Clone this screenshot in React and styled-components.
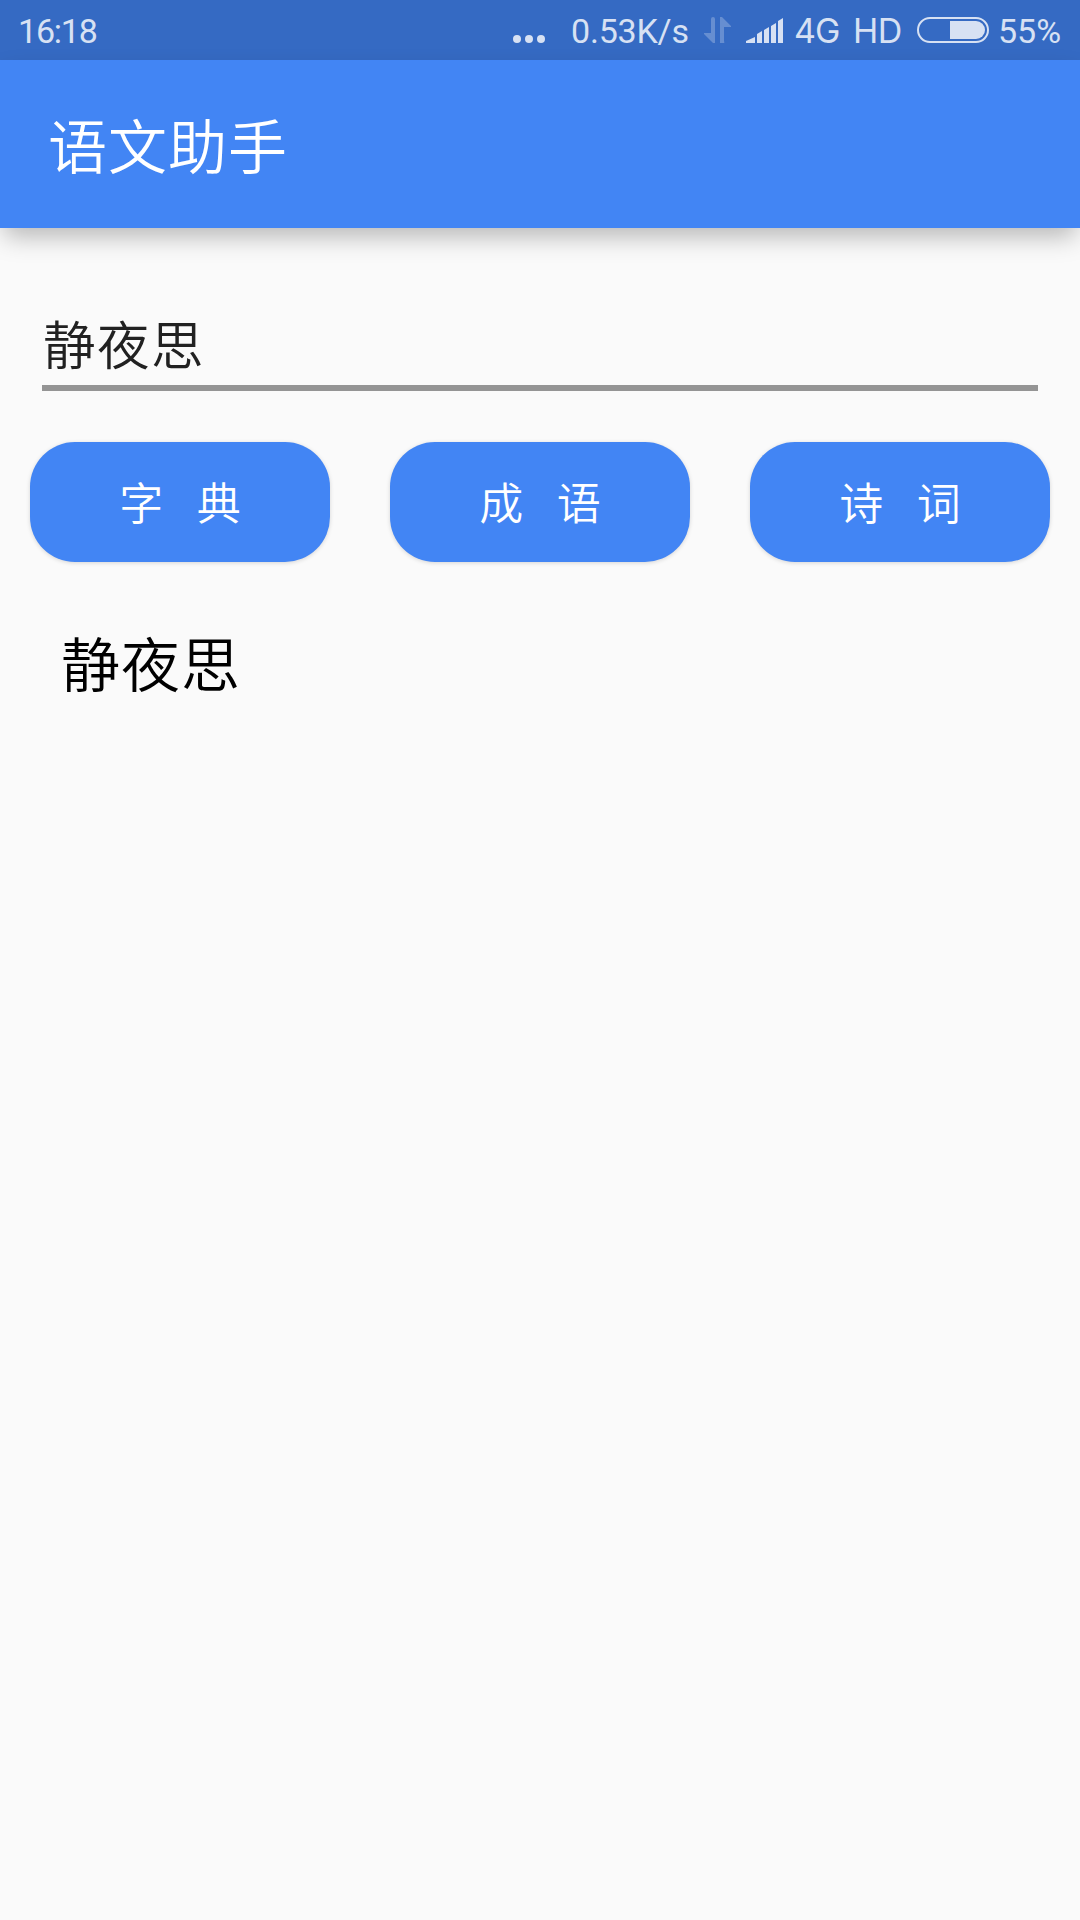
import React, { useState } from 'react'
import styled, { createGlobalStyle } from 'styled-components'

const categories = ['字 典', '成 语', '诗 词']

const App = () => {
    const [keyword, setKeyword] = useState('静夜思')

    return (
        <Screen>
            <GlobalStyle />
            <StatusBar>
                <StatusText $width={495} $spacing={-1.2}>16:18</StatusText>
                <Dots viewBox="0 0 32 8">
                    <circle cx="4" cy="4" r="4" />
                    <circle cx="16" cy="4" r="4" />
                    <circle cx="28" cy="4" r="4" />
                </Dots>
                <StatusText $width={133} $spacing={-0.2}>0.53K/s</StatusText>
                <Transfer viewBox="0 0 27 26">
                    <path d="M7 2a2 2 0 0 1 4 0v24h-2L0 17v-1h7zM16 26V0h2l9 9v1h-7v14a2 2 0 0 1-4 2z" />
                </Transfer>
                <Signal viewBox="0 0 37 25">
                    <path d="M0 25v-2l9-4v6zM11 25v-9l5-3v12zM18 25V12l5-3v16zM25 25V8l5-3v20zM32 25V3l5-3v25z" />
                </Signal>
                <NetworkText $width={59} $spacing={-1}>4G</NetworkText>
                <NetworkText $width={64} $spacing={-0.6}>HD</NetworkText>
                <Battery viewBox="0 0 72 26">
                    <rect x="1" y="1" width="70" height="24" rx="12" />
                    <path d="M33 4h26a9 9 0 0 1 0 18H33z" />
                </Battery>
                <StatusText $width={82} $spacing={0}>55%</StatusText>
            </StatusBar>
            <AppBar>
                <h1>语文助手</h1>
            </AppBar>
            <Content>
                <SearchInput value={keyword} onChange={(e) => setKeyword(e.target.value)} />
                <ButtonRow>
                    {categories.map((name) => (
                        <CategoryButton key={name}>{name}</CategoryButton>
                    ))}
                </ButtonRow>
                <Result>{keyword}</Result>
            </Content>
        </Screen>
    )
}

const GlobalStyle = createGlobalStyle`
    body{
        margin: 0;
        background: #fafafa;
    }
    *{
        box-sizing: border-box;
    }
`

const Screen = styled.div`
    height: 1920px;
    overflow: hidden;
    background: #fafafa;
    font-family: Roboto, 'Noto Sans CJK SC', sans-serif;
`

const StatusBar = styled.div`
    display: flex;
    align-items: center;
    height: 60px;
    padding-left: 18px;
    background: #356ac3;
    color: #d7e1f3;
    svg{
        flex: none;
        fill: #d7e1f3;
    }
`

const StatusText = styled.span`
    flex: none;
    width: ${(props) => props.$width}px;
    font-size: 34px;
    line-height: 60px;
    padding-top: 2px;
    letter-spacing: ${(props) => props.$spacing}px;
    white-space: nowrap;
`

const NetworkText = styled(StatusText)`
    font-family: Inter, sans-serif;
`

const Dots = styled.svg`
    width: 32px;
    height: 8px;
    margin: 18px 26px 0 0;
`

const Transfer = styled.svg`
    width: 27px;
    height: 26px;
    margin-right: 15px;
    opacity: 0.3;
`

const Signal = styled.svg`
    width: 37px;
    height: 25px;
    margin: 1px 11px 0 0;
`

const Battery = styled.svg`
    width: 72px;
    height: 26px;
    margin-right: 9px;
    rect{
        fill: none;
        stroke: #d7e1f3;
        stroke-width: 2;
    }
`

const AppBar = styled.header`
    position: relative;
    display: flex;
    align-items: center;
    height: 168px;
    padding: 9px 0 0 48px;
    background: #4285f4;
    box-shadow: 0 12px 24px -4px rgba(0,0,0,0.28);
    h1{
        margin: 0;
        color: #fff;
        font-size: 59px;
        font-weight: 350;
        line-height: 84px;
        letter-spacing: 1px;
    }
`

const Content = styled.main`
    padding: 72px 30px 0;
`

const SearchInput = styled.input`
    display: block;
    width: 996px;
    height: 91px;
    margin: 0 12px;
    padding: 0 0 2px 1px;
    border: none;
    border-bottom: 6px solid #949494;
    outline: none;
    background: none;
    color: #212121;
    font-family: inherit;
    font-size: 52.5px;
    font-weight: 350;
    letter-spacing: 1.5px;
`

const ButtonRow = styled.div`
    display: flex;
    gap: 60px;
    margin-top: 51px;
`

const CategoryButton = styled.button`
    width: 300px;
    height: 120px;
    padding: 0 0 2px;
    border: none;
    border-radius: 45px;
    background: #4285f4;
    box-shadow: 0 1px 4px rgba(0,0,0,0.15);
    color: #fff;
    font-family: inherit;
    font-size: 44px;
    font-weight: 350;
    word-spacing: 23px;
`

const Result = styled.p`
    margin: 63px 0 0 31px;
    color: #000;
    font-size: 59px;
    font-weight: 350;
    line-height: 84px;
    letter-spacing: 1px;
`

export default App;
